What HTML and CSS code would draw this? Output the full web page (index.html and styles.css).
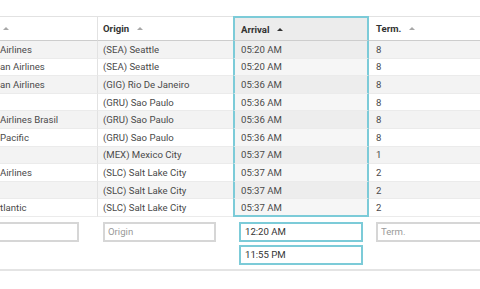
FILE: index.html
```html
<!DOCTYPE html>
<html lang="en">
<head>
<meta charset="utf-8">
<title>Flights grid</title>
<link rel="stylesheet" href="styles.css">
</head>
<body>
<div class="grid">
  <div class="row head">
    <div class="cell c1"><span class="sort"></span></div>
    <div class="cell c2">Origin<span class="sort"></span></div>
    <div class="cell c3">Arrival<span class="sort on"></span></div>
    <div class="cell c4">Term.<span class="sort"></span></div>
  </div>
  <div class="row alt"><div class="cell c1">Airlines</div><div class="cell c2">(SEA) Seattle</div><div class="cell c3">05:20 AM</div><div class="cell c4">8</div></div>
  <div class="row"><div class="cell c1">an Airlines</div><div class="cell c2">(SEA) Seattle</div><div class="cell c3">05:20 AM</div><div class="cell c4">8</div></div>
  <div class="row alt"><div class="cell c1">an Airlines</div><div class="cell c2">(GIG) Rio De Janeiro</div><div class="cell c3">05:36 AM</div><div class="cell c4">8</div></div>
  <div class="row"><div class="cell c1"></div><div class="cell c2">(GRU) Sao Paulo</div><div class="cell c3">05:36 AM</div><div class="cell c4">8</div></div>
  <div class="row alt"><div class="cell c1">Airlines Brasil</div><div class="cell c2">(GRU) Sao Paulo</div><div class="cell c3">05:36 AM</div><div class="cell c4">8</div></div>
  <div class="row"><div class="cell c1">Pacific</div><div class="cell c2">(GRU) Sao Paulo</div><div class="cell c3">05:36 AM</div><div class="cell c4">8</div></div>
  <div class="row alt"><div class="cell c1"></div><div class="cell c2">(MEX) Mexico City</div><div class="cell c3">05:37 AM</div><div class="cell c4">1</div></div>
  <div class="row"><div class="cell c1">Airlines</div><div class="cell c2">(SLC) Salt Lake City</div><div class="cell c3">05:37 AM</div><div class="cell c4">2</div></div>
  <div class="row alt"><div class="cell c1"></div><div class="cell c2">(SLC) Salt Lake City</div><div class="cell c3">05:37 AM</div><div class="cell c4">2</div></div>
  <div class="row last"><div class="cell c1">tlantic</div><div class="cell c2">(SLC) Salt Lake City</div><div class="cell c3">05:37 AM</div><div class="cell c4">2</div></div>

  <div class="filters">
    <div class="fcell f1"><input class="fin" type="text"></div>
    <div class="fcell f2"><input class="fin" type="text" placeholder="Origin"></div>
    <div class="fcell f3">
      <input class="fin sel" type="text" value="12:20 AM">
      <input class="fin sel" type="text" value="11:55 PM">
    </div>
    <div class="fcell f4"><input class="fin" type="text" placeholder="Term."></div>
  </div>
</div>
</body>
</html>
```

FILE: styles.css
```css
html, body {
  margin: 0;
  background: #ffffff;
}

body {
  font-family: Roboto, "Liberation Sans", sans-serif;
  font-size: 9.6px;
  color: #4a4a4a;
}

.grid {
  width: 480px;
  padding-top: 16px;
  overflow: hidden;
}

.row {
  display: grid;
  grid-template-columns: 97px 136px 136px 111px;
  height: 17.6px;
  background: #ffffff;
}

.row.alt {
  background: #f3f3f3;
}

.cell {
  box-sizing: border-box;
  display: flex;
  align-items: center;
  white-space: nowrap;
  overflow: hidden;
  padding: 0 6px;
  border-bottom: 1px solid #ebebeb;
}

.c1 {
  padding-left: 0;
}

.c2 {
  border-left: 1px solid #e2e2e2;
  padding-left: 5px;
}

.c3 {
  border-left: 2px solid #7ccbd8;
  border-right: 2px solid #7ccbd8;
  padding-left: 6px;
  background: #f6f6f6;
}

.row.alt .c3 {
  background: #ededed;
}

.c4 {
  padding-left: 7px;
}

.row.head {
  height: 25px;
}

.head .cell {
  border-top: 1px solid #e2e2e2;
  border-bottom: 1px solid #cdcdcd;
  font-weight: 700;
  color: #333333;
}

.head .c3 {
  border-top: 2px solid #7ccbd8;
  background: #ececec;
}

.row.last .c3 {
  border-bottom: 2px solid #7ccbd8;
}

.sort {
  display: inline-block;
  width: 0;
  height: 0;
  margin-left: 8px;
  border-left: 3px solid transparent;
  border-right: 3px solid transparent;
  border-bottom: 3px solid #a8a8a8;
}

.c1 .sort {
  margin-left: 3px;
}

.sort.on {
  border-bottom-color: #333333;
}

.filters {
  display: grid;
  grid-template-columns: 97px 136px 136px 111px;
  padding: 5px 0 4px;
  border-bottom: 2px solid #e4e4e4;
}

.fcell {
  display: flex;
  flex-direction: column;
  gap: 3px;
  min-width: 0;
}

.fin {
  box-sizing: border-box;
  height: 20px;
  margin: 0;
  padding: 0 3px;
  border: 2px solid #d6d6d6;
  border-radius: 0;
  background: #ffffff;
  font-family: Roboto, "Liberation Sans", sans-serif;
  font-size: 9.6px;
  color: #333333;
  outline: none;
}

.fin::placeholder {
  color: #9a9a9a;
}

.fin.sel {
  border-color: #7ccbd8;
  padding-left: 4px;
}

.f1 .fin {
  width: 85px;
  margin-left: -6px;
}

.f2 .fin {
  width: 113px;
  margin-left: 6px;
}

.f3 .fin {
  width: 124px;
  margin-left: 6px;
}

.f4 .fin {
  width: 130px;
  margin-left: 7px;
}
```
